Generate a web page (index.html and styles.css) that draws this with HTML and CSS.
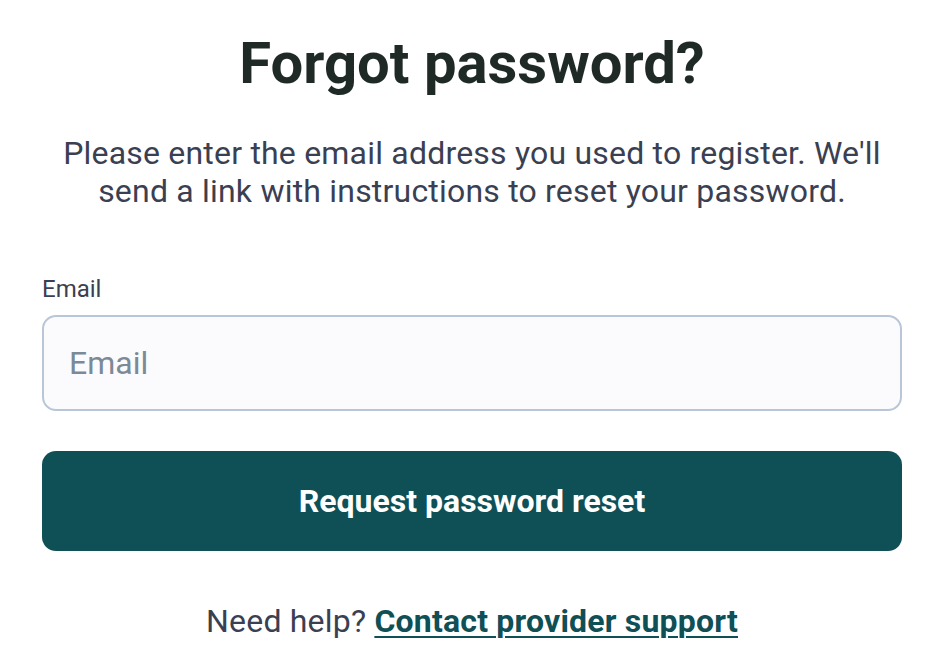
FILE: index.html
```html
<!DOCTYPE html>
<html lang="en">
<head>
    <meta charset="UTF-8">
    <meta name="viewport" content="width=device-width, initial-scale=1.0">
    <title>Forgot password</title>
    <link rel="stylesheet" href="styles.css">
</head>
<body>
    <div class="container">
        <h1>Forgot password?</h1>
        <p class="intro">Please enter the email address you used to register. We'll send a link with instructions to reset your password.</p>

        <form class="reset-form">
            <label class="field-label" for="email">Email</label>
            <input class="field-input" id="email" type="email" placeholder="Email">
            <button class="submit-btn" type="submit">Request password reset</button>
        </form>

        <p class="help">Need help? <a href="#">Contact provider support</a></p>
    </div>
</body>
</html>
```

FILE: styles.css
```css
:root {
    --color-heading: #1f2a27;
    --color-text: #3b3f52;
    --color-brand: #0f4f56;
    --color-border: #b9c6d8;
    --color-input-bg: #fbfbfe;
    --color-placeholder: #7b8a97;
}

body {
    font-family: Roboto, 'Liberation Sans', Arial, sans-serif;
    margin: 0;
    background: white;
    color: var(--color-text);
}

.container {
    width: 860px;
    margin-left: 42px;
    padding-top: 29px;
}

h1 {
    font-size: 58px;
    font-weight: 700;
    line-height: 68px;
    text-align: center;
    color: var(--color-heading);
    margin: 0;
}

.intro {
    font-size: 32px;
    line-height: 38px;
    letter-spacing: 0.2px;
    text-align: center;
    margin: 37px 0 0;
    padding: 0 20px;
}

.reset-form {
    display: flex;
    flex-direction: column;
    margin-top: 65px;
}

.field-label {
    font-size: 24px;
    line-height: 28px;
    margin-bottom: 12px;
}

.field-input {
    box-sizing: border-box;
    height: 96px;
    padding: 0 25px;
    font-family: inherit;
    font-size: 32px;
    color: var(--color-text);
    background: var(--color-input-bg);
    border: 2px solid var(--color-border);
    border-radius: 14px;
    outline: none;
}

.field-input::placeholder {
    color: var(--color-placeholder);
}

.submit-btn {
    height: 100px;
    margin-top: 40px;
    font-family: inherit;
    font-size: 32px;
    font-weight: 700;
    color: white;
    background: var(--color-brand);
    border: none;
    border-radius: 14px;
}

.help {
    font-size: 32px;
    line-height: 38px;
    letter-spacing: 0.2px;
    text-align: center;
    margin: 51px 0 0;
}

.help a {
    font-weight: 700;
    color: var(--color-brand);
    text-decoration: underline;
    text-underline-offset: 4px;
    text-decoration-thickness: 2px;
}
```
